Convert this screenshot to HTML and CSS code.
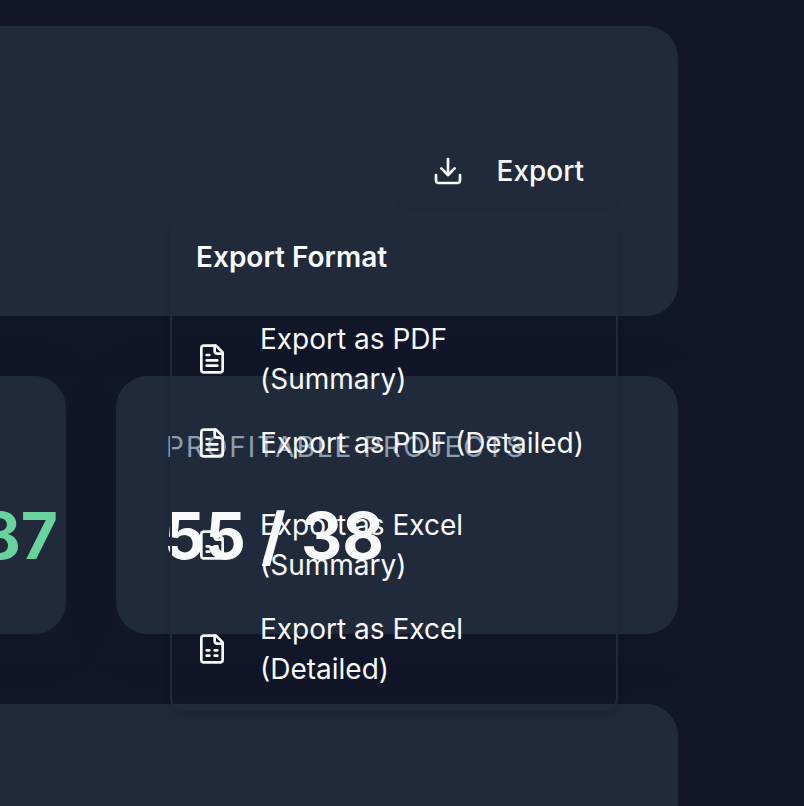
FILE: index.html
```html
<!DOCTYPE html>
<html lang="en">
<head>
<meta charset="utf-8">
<title>Projects</title>
<link rel="stylesheet" href="styles.css">
</head>
<body>
<main class="page">
  <section class="card toolbar">
    <div class="export">
      <button class="export-button">
        <svg class="icon" viewBox="0 0 24 24"><path d="M21 15v4a2 2 0 0 1-2 2H5a2 2 0 0 1-2-2v-4"/><path d="m7 10 5 5 5-5"/><path d="M12 15V3"/></svg>
        <span>Export</span>
      </button>
      <div class="menu">
        <div class="menu-label">Export Format</div>
        <div class="separator"></div>
        <div class="menu-item">
          <svg class="icon" viewBox="0 0 24 24"><path d="M15 2H6a2 2 0 0 0-2 2v16a2 2 0 0 0 2 2h12a2 2 0 0 0 2-2V7Z"/><path d="M14 2v4a2 2 0 0 0 2 2h4"/><path d="M10 9H8M16 13H8M16 17H8"/></svg>
          <span>Export as PDF (Summary)</span>
        </div>
        <div class="menu-item">
          <svg class="icon" viewBox="0 0 24 24"><path d="M15 2H6a2 2 0 0 0-2 2v16a2 2 0 0 0 2 2h12a2 2 0 0 0 2-2V7Z"/><path d="M14 2v4a2 2 0 0 0 2 2h4"/><path d="M10 9H8M16 13H8M16 17H8"/></svg>
          <span>Export as PDF (Detailed)</span>
        </div>
        <div class="separator"></div>
        <div class="menu-item">
          <svg class="icon" viewBox="0 0 24 24"><path d="M15 2H6a2 2 0 0 0-2 2v16a2 2 0 0 0 2 2h12a2 2 0 0 0 2-2V7Z"/><path d="M14 2v4a2 2 0 0 0 2 2h4"/><path d="M8 13h2M14 13h2M8 17h2M14 17h2"/></svg>
          <span>Export as Excel (Summary)</span>
        </div>
        <div class="menu-item">
          <svg class="icon" viewBox="0 0 24 24"><path d="M15 2H6a2 2 0 0 0-2 2v16a2 2 0 0 0 2 2h12a2 2 0 0 0 2-2V7Z"/><path d="M14 2v4a2 2 0 0 0 2 2h4"/><path d="M8 13h2M14 13h2M8 17h2M14 17h2"/></svg>
          <span>Export as Excel (Detailed)</span>
        </div>
      </div>
    </div>
  </section>
  <div class="stats">
    <section class="card stat stat-profit">
      <div class="stat-value positive">87</div>
    </section>
    <section class="card stat stat-projects">
      <div class="stat-label">Profitable Projects</div>
      <div class="stat-value">55 / 38</div>
    </section>
  </div>
  <section class="card panel"></section>
</main>
</body>
</html>
```

FILE: styles.css
```css
* { box-sizing: border-box; }

body {
  margin: 0;
  height: 806px;
  overflow: hidden;
  background: #12182a;
  color: #f8fafc;
  font: 400 28px/40px Inter, sans-serif;
}

.page {
  display: flex;
  flex-direction: column;
  width: 728px;
  height: 806px;
  margin-left: -50px;
  padding-top: 26px;
}

.card {
  flex: none;
  border: 2px solid #212a3a;
  border-radius: 32px;
  background: #212a3a;
  box-shadow: 0 8px 60px rgba(0, 0, 0, 0.1);
}

.toolbar {
  display: flex;
  justify-content: flex-end;
  align-items: center;
  height: 290px;
  padding: 0 58px;
}

.export { position: relative; }

.export-button {
  display: flex;
  align-items: center;
  gap: 32.5px;
  width: 220px;
  height: 72px;
  padding: 0 0 0 32px;
  border: 2px solid #212a3a;
  border-radius: 12px;
  background: #212a3a;
  box-shadow: 0 2px 4px rgba(0, 0, 0, 0.06);
  color: inherit;
  font: inherit;
  font-weight: 500;
}

.icon {
  flex: none;
  width: 32px;
  height: 32px;
  fill: none;
  stroke: currentColor;
  stroke-width: 2;
  stroke-linecap: round;
  stroke-linejoin: round;
}

.menu {
  position: absolute;
  z-index: 2;
  top: 80px;
  right: 0;
  width: 448px;
  padding: 8px;
  border: 2px solid #212a3a;
  border-radius: 12px;
  box-shadow: 0 8px 12px -2px rgba(0, 0, 0, 0.07), 0 4px 8px -4px rgba(0, 0, 0, 0.07);
}

.menu-label {
  padding: 12px 16px;
  font-weight: 600;
}

.separator { height: 18px; }

.menu-item {
  display: flex;
  align-items: center;
  gap: 32px;
  padding: 12px 16px;
}

.stats {
  display: flex;
  flex: none;
  gap: 50px;
  height: 258px;
  margin: 60px 0 70px;
}

.stat { padding: 49px 48px; }

.stat-profit {
  display: flex;
  justify-content: flex-end;
  width: 116px;
  padding: 70px 6px 0 0;
}

.stat-projects { width: 562px; }

.stat-label {
  color: #8f9bb0;
  letter-spacing: 2px;
  text-transform: uppercase;
}

.stat-value {
  margin: 29px 0 0 -2px;
  font-size: 64px;
  font-weight: 700;
  line-height: 80px;
}

.positive {
  margin-top: 48px;
  color: #68d39c;
}

.panel {
  height: 102px;
  border-bottom: 0;
  border-radius: 32px 32px 0 0;
}
```
